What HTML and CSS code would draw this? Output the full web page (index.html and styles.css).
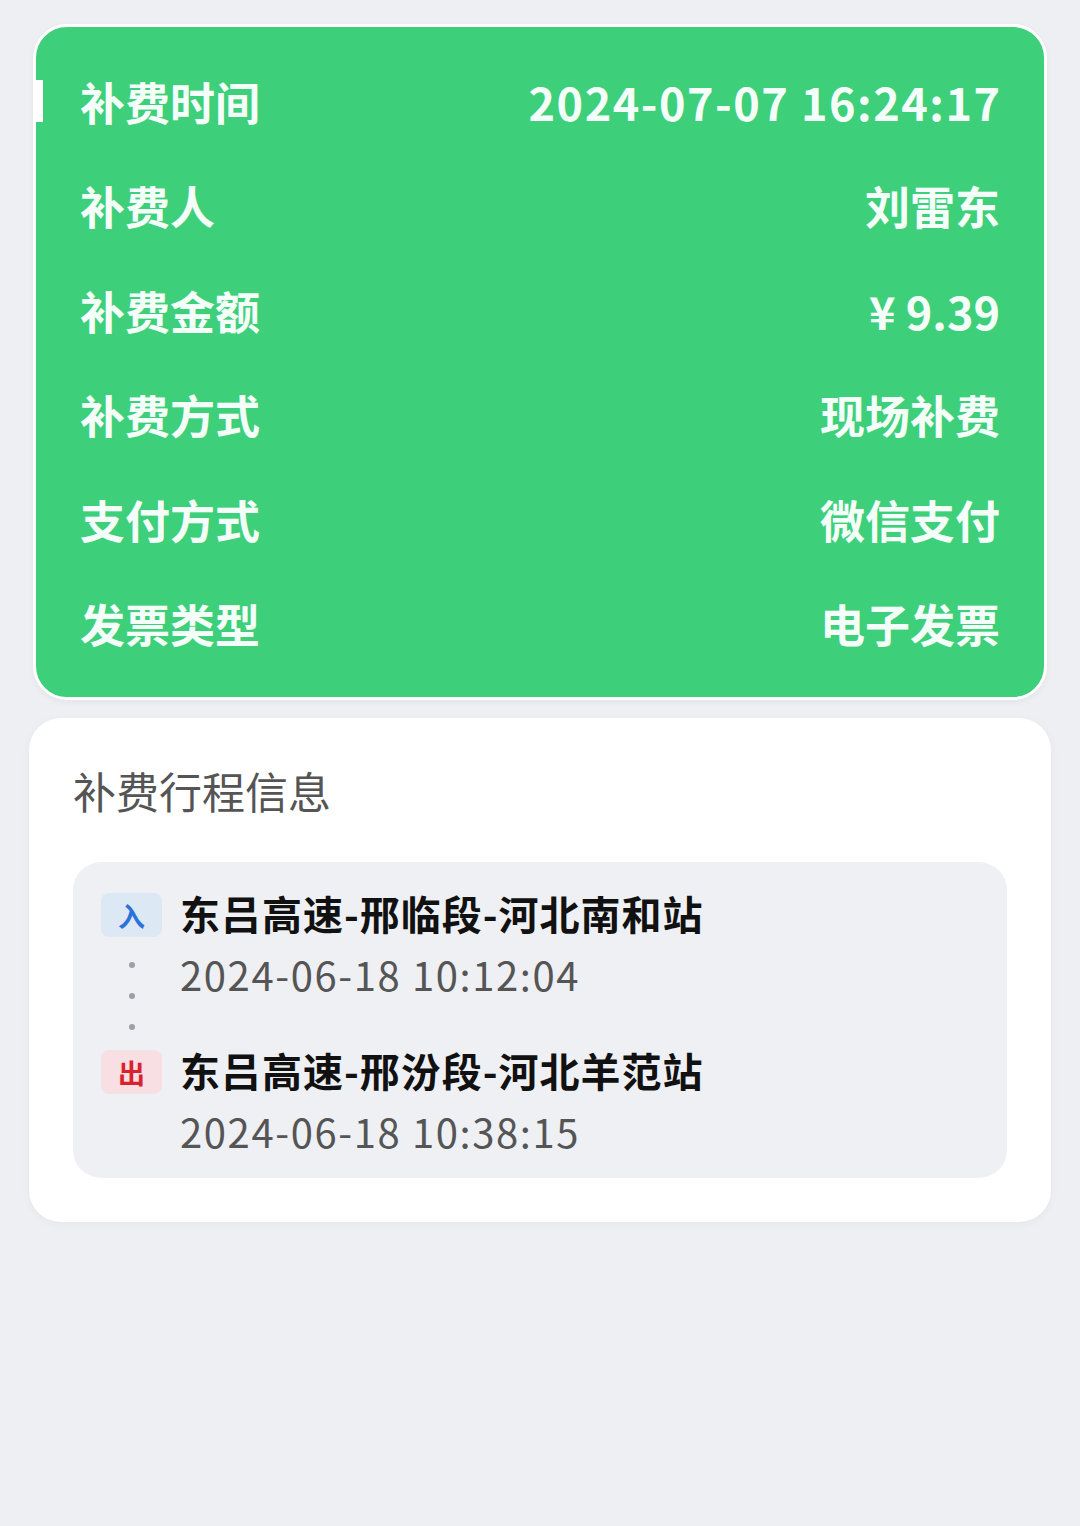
FILE: index.html
```html
<!DOCTYPE html>
<html lang="zh-CN">
<head>
    <meta charset="UTF-8">
    <meta name="viewport" content="width=device-width, initial-scale=1.0">
    <title>补费详情</title>
    <link rel="stylesheet" href="styles.css">
</head>
<body>
    <!-- Payment summary -->
    <div class="summary">
        <span class="marker"></span>
        <div class="row"><span>补费时间</span><span class="num wide">2024-07-07 16:24:17</span></div>
        <div class="row"><span>补费人</span><span>刘雷东</span></div>
        <div class="row"><span>补费金额</span><span class="num">¥ 9.39</span></div>
        <div class="row"><span>补费方式</span><span>现场补费</span></div>
        <div class="row"><span>支付方式</span><span>微信支付</span></div>
        <div class="row"><span>发票类型</span><span>电子发票</span></div>
    </div>

    <!-- Trip info -->
    <div class="card">
        <h3 class="card-title">补费行程信息</h3>
        <div class="trip">
            <div class="stop first">
                <div class="side">
                    <span class="badge in">入</span>
                    <span class="dot"></span>
                    <span class="dot"></span>
                    <span class="dot"></span>
                </div>
                <div class="info">
                    <div class="station">东吕高速-邢临段-河北南和站</div>
                    <div class="time">2024-06-18 10:12:04</div>
                </div>
            </div>
            <div class="stop">
                <div class="side">
                    <span class="badge out">出</span>
                </div>
                <div class="info">
                    <div class="station">东吕高速-邢汾段-河北羊范站</div>
                    <div class="time">2024-06-18 10:38:15</div>
                </div>
            </div>
        </div>
    </div>
</body>
</html>
```

FILE: styles.css
```css
body {
    margin: 0;
    min-height: 1526px;
    background-color: #eeeff2;
    font-family: "Noto Sans CJK SC", "Noto Sans", sans-serif;
}
.summary {
    position: relative;
    margin: 24px 33px 0;
    padding: 22px 44px 21px;
    background-color: #3ecf7a;
    border: 3px solid #fff;
    border-radius: 34px;
    box-shadow: 0 2px 6px rgba(0, 0, 0, 0.05);
}
.marker {
    position: absolute;
    left: 0;
    top: 53px;
    width: 7px;
    height: 42px;
    background-color: #fff;
}
.row {
    display: flex;
    justify-content: space-between;
    align-items: center;
    height: 104.5px;
    color: #f5fff9;
    font-size: 45px;
    font-weight: bold;
}
.row .num {
    font-size: 45px;
}
.row .wide {
    letter-spacing: 1.5px;
    margin-right: -1.5px;
}
.card {
    margin: 18px 29px 0;
    padding: 46px 44px 44px;
    background-color: #fff;
    border-radius: 32px;
    box-shadow: 0 2px 10px rgba(0, 0, 0, 0.04);
}
.card-title {
    margin: 0 0 46px;
    font-size: 43px;
    font-weight: normal;
    line-height: 52px;
    color: #555;
}
.trip {
    padding: 25px 28px 21px;
    background-color: #eef0f4;
    border-radius: 28px;
}
.stop {
    display: flex;
    align-items: flex-start;
    gap: 18px;
    height: 113px;
}
.stop.first {
    height: 157px;
}
.side {
    display: flex;
    flex-direction: column;
    align-items: center;
    width: 61px;
    gap: 25px;
}
.badge {
    display: flex;
    justify-content: center;
    align-items: center;
    width: 61px;
    height: 44px;
    margin-top: 6px;
    border-radius: 8px;
    font-size: 27px;
    font-weight: bold;
    line-height: 1;
}
.badge.in {
    color: #2d72d9;
    background-color: #dde8f5;
}
.badge.out {
    color: #d8232f;
    background-color: #f8dfe4;
}
.dot {
    width: 6px;
    height: 6px;
    border-radius: 50%;
    background-color: #9c9fa4;
}
.station {
    height: 52px;
    font-size: 40px;
    font-weight: bold;
    line-height: 52px;
    letter-spacing: 1px;
    color: #111;
}
.time {
    height: 52px;
    margin-top: 9px;
    font-size: 40px;
    line-height: 52px;
    letter-spacing: 1.6px;
    color: #555;
}
```
